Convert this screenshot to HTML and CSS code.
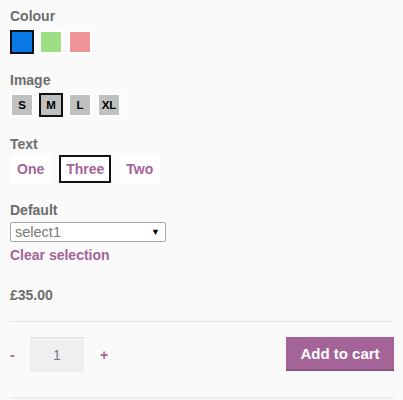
FILE: index.html
```html
<!DOCTYPE html>
<html>
<head>
<meta charset="utf-8">
<link rel="stylesheet" href="styles.css">
</head>
<body>
<div class="product">
  <div class="group group-colour">
    <div class="label">Colour</div>
    <div class="options swatches">
      <span class="swatch selected"><span class="fill blue"></span></span>
      <span class="swatch"><span class="fill green"></span></span>
      <span class="swatch"><span class="fill pink"></span></span>
    </div>
  </div>
  <div class="group group-image">
    <div class="label">Image</div>
    <div class="options sizes">
      <span class="size"><span class="size-in">S</span></span>
      <span class="size selected"><span class="size-in">M</span></span>
      <span class="size"><span class="size-in">L</span></span>
      <span class="size"><span class="size-in">XL</span></span>
    </div>
  </div>
  <div class="group group-text">
    <div class="label">Text</div>
    <div class="options texts">
      <span class="textopt">One</span>
      <span class="textopt selected">Three</span>
      <span class="textopt">Two</span>
    </div>
  </div>
  <div class="group group-default">
    <div class="label">Default</div>
    <div class="select-wrap">
      <select class="select"><option>select1</option></select>
    </div>
  </div>
  <a class="clear">Clear selection</a>
  <div class="price">£35.00</div>
  <div class="cart">
    <div class="qty">
      <span class="qty-btn minus">-</span>
      <span class="qty-input">1</span>
      <span class="qty-btn plus">+</span>
    </div>
    <button class="add">Add to cart</button>
  </div>
</div>
</body>
</html>
```
FILE: styles.css
```css
html, body {
  margin: 0;
  padding: 0;
  background: #fafafa;
}
body {
  font-family: "Liberation Sans", Arial, sans-serif;
  color: #6d6d6d;
}
.product {
  padding: 6px 9px 0 10px;
}
.label {
  font-size: 14px;
  font-weight: bold;
  line-height: 20px;
  color: #6d6d6d;
}
.options {
  display: flex;
  gap: 5px;
  align-items: center;
}
.group-image { margin-top: 16px; }
.group-text { margin-top: 17px; }
.group-default { margin-top: 17px; }
.group-colour .options { margin-top: 4px; }
.group-image .options { margin-top: 3px; }
.group-text .options { margin-top: 1px; gap: 8px; }

.swatch {
  display: block;
  width: 20px;
  height: 20px;
  border: 2px solid #fff;
}
.swatch.selected { border-color: #111; }
.fill { display: block; width: 100%; height: 100%; }
.blue { background: #0a77e6; }
.green { background: #9edf86; }
.pink { background: #ef9595; }

.size {
  display: block;
  border: 2px solid #fff;
}
.size.selected { border-color: #111; }
.size-in {
  display: block;
  min-width: 16px;
  padding: 0 2px;
  height: 20px;
  line-height: 20px;
  background: #c0c0c0;
  color: #000;
  font-size: 11.5px;
  font-weight: bold;
  text-align: center;
}

.textopt {
  display: block;
  border: 2px solid #fff;
  background: #fff;
  padding: 4px 5px;
  line-height: 16px;
  font-size: 14px;
  font-weight: bold;
  color: #a46497;
}
.textopt.selected { border-color: #111; }

.select-wrap {
  position: relative;
  width: 156px;
  margin-top: 2px;
}
.select-wrap::after {
  content: "\25BC";
  position: absolute;
  right: 6px;
  top: 5px;
  font-size: 9px;
  color: #000;
  pointer-events: none;
}
.select {
  appearance: none;
  -webkit-appearance: none;
  display: block;
  width: 156px;
  height: 20px;
  margin: 0;
  padding: 0 0 0 4px;
  border: 1px solid #a6a6a6;
  border-radius: 2px;
  background: #fff;
  font-family: "Liberation Sans", Arial, sans-serif;
  font-size: 14.5px;
  color: #777;
  line-height: 18px;
}

.clear {
  display: block;
  margin-top: 3px;
  font-size: 14px;
  font-weight: bold;
  line-height: 20px;
  color: #a46497;
}
.price {
  margin-top: 20px;
  font-size: 14px;
  font-weight: bold;
  line-height: 20px;
  color: #6d6d6d;
  padding-bottom: 16px;
  border-bottom: 1px solid #e3e3e3;
}
.cart {
  display: flex;
  justify-content: space-between;
  align-items: flex-start;
  padding: 15px 0 25px;
  border-bottom: 2px solid #eeeeee;
}
.qty {
  display: flex;
  align-items: center;
}
.qty-btn {
  font-size: 14px;
  font-weight: bold;
  color: #a46497;
}
.minus { width: 20px; }
.plus { margin-left: 16px; }
.qty-input {
  display: block;
  width: 54px;
  height: 34px;
  line-height: 34px;
  border-top: 1px solid #dcdcdc;
  background: #efefef;
  text-align: center;
  font-size: 14px;
  color: #6d7b8d;
}
.add {
  width: 108px;
  height: 34px;
  padding: 0;
  margin: 0;
  border: 0;
  border-bottom: 2px solid #8b5480;
  background: #a46497;
  color: #fff;
  font-family: "Liberation Sans", Arial, sans-serif;
  font-size: 15px;
  font-weight: bold;
}
```
